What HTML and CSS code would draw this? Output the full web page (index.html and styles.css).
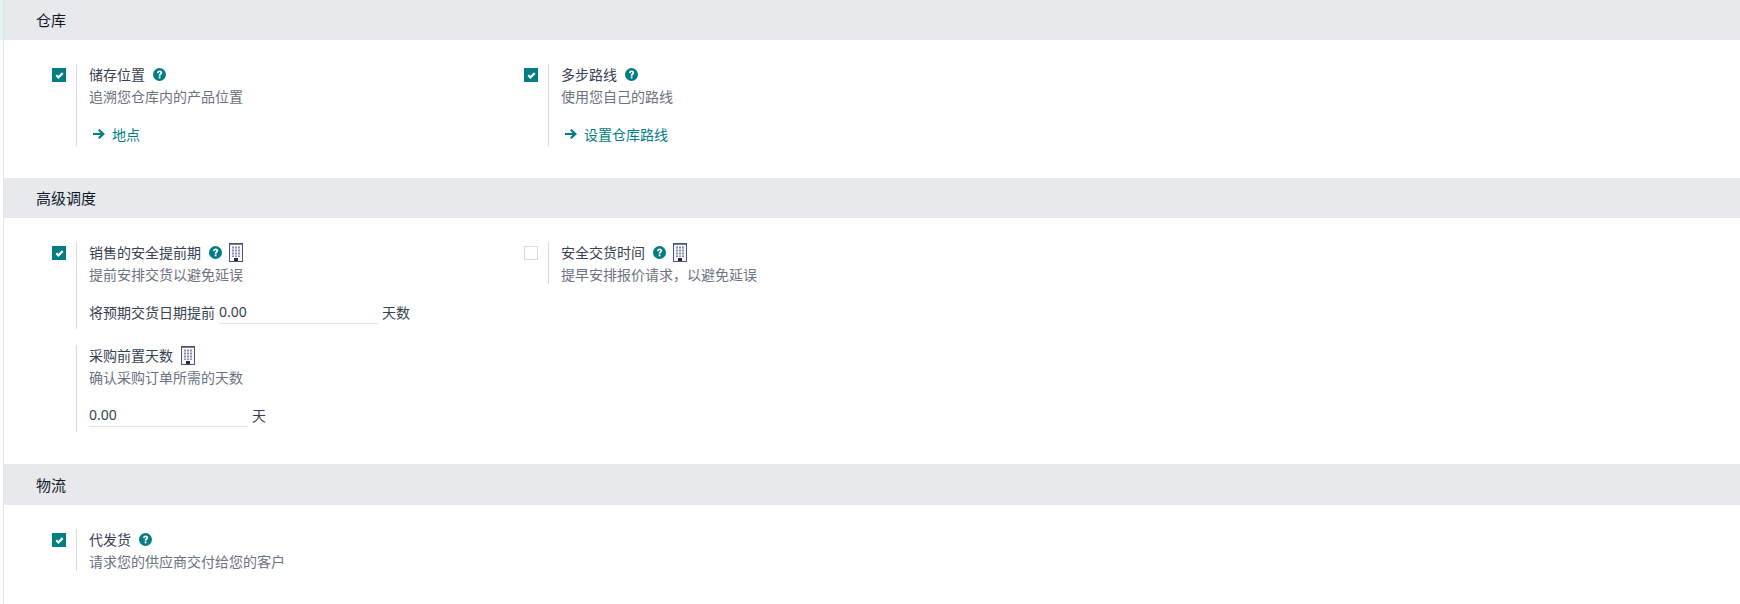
FILE: index.html
```html
<!DOCTYPE html>
<html lang="zh-CN">
<head>
<meta charset="utf-8">
<title>设置</title>
<link rel="stylesheet" href="styles.css">
</head>
<body>
<svg class="defs" width="0" height="0" aria-hidden="true">
  <symbol id="building" viewBox="0 0 14 19">
    <rect x="0.5" y="0.5" width="13" height="18" fill="#f4f7fc" stroke="#4a5273"/>
    <rect x="1" y="1" width="12" height="1" fill="#7d7f95"/>
    <g fill="#8d8fa8">
      <rect x="3" y="3.500" width="2" height="2"/><rect x="6" y="3.500" width="2" height="2"/><rect x="9" y="3.500" width="2" height="2"/>
      <rect x="3" y="6.500" width="2" height="2"/><rect x="6" y="6.500" width="2" height="2"/><rect x="9" y="6.500" width="2" height="2"/>
      <rect x="3" y="9.500" width="2" height="2"/><rect x="6" y="9.500" width="2" height="2"/><rect x="9" y="9.500" width="2" height="2"/>
      <rect x="3" y="12.500" width="2" height="1.500"/><rect x="6" y="12.500" width="2" height="1.500"/><rect x="9" y="12.500" width="2" height="1.500"/>
    </g>
    <rect x="5" y="15" width="4" height="3" fill="#2f2a33"/>
  </symbol>
  <symbol id="help" viewBox="0 0 13 13">
    <circle cx="6.500" cy="6.500" r="6.500" fill="#017e84"/>
    <path d="M4 5C4 3.400 5.100 2.500 6.600 2.500S9.200 3.400 9.200 4.700C9.200 6.400 7.500 6.400 7.500 7.700H5.700C5.700 5.600 7.300 5.700 7.300 4.800 7.300 4.400 7 4.100 6.500 4.100S5.700 4.500 5.700 5.200z" fill="#fff"/>
    <rect x="5.700" y="8.500" width="1.800" height="1.800" fill="#fff"/>
  </symbol>
  <symbol id="tick" viewBox="0 0 14 14">
    <path d="M4.300 7.300l2.100 2.100 4.300-4.300" fill="none" stroke="#fff" stroke-width="2.200"/>
  </symbol>
  <symbol id="arrow" viewBox="0 0 12 10">
    <path d="M0 4h7.500L5 1.500 6.500 0 12 5 6.500 10 5 8.500 7.500 6H0z" fill="#017e84"/>
  </symbol>
</svg>
<main class="page">
  <section>
    <h2 class="band">仓库</h2>
    <div class="grid short">
      <div class="setting">
        <span class="check on"><svg><use href="#tick"/></svg></span>
        <div class="body">
          <div class="label">储存位置<svg class="help"><use href="#help"/></svg></div>
          <div class="desc">追溯您仓库内的产品位置</div>
          <a class="link"><svg class="arrow"><use href="#arrow"/></svg>地点</a>
        </div>
      </div>
      <div class="setting">
        <span class="check on"><svg><use href="#tick"/></svg></span>
        <div class="body">
          <div class="label">多步路线<svg class="help"><use href="#help"/></svg></div>
          <div class="desc">使用您自己的路线</div>
          <a class="link"><svg class="arrow"><use href="#arrow"/></svg>设置仓库路线</a>
        </div>
      </div>
    </div>
  </section>
  <section>
    <h2 class="band">高级调度</h2>
    <div class="grid tall">
      <div class="stack">
        <div class="setting">
          <span class="check on"><svg><use href="#tick"/></svg></span>
          <div class="body">
            <div class="label">销售的安全提前期<svg class="help"><use href="#help"/></svg><svg class="bld"><use href="#building"/></svg></div>
            <div class="desc">提前安排交货以避免延误</div>
            <div class="field"><span class="prefix">将预期交货日期提前</span><span class="input">0.00</span><span class="unit">天数</span></div>
          </div>
        </div>
        <div class="setting">
          <span class="check none"></span>
          <div class="body">
            <div class="label">采购前置天数<svg class="bld"><use href="#building"/></svg></div>
            <div class="desc">确认采购订单所需的天数</div>
            <div class="field"><span class="input">0.00</span><span class="unit">天</span></div>
          </div>
        </div>
      </div>
      <div class="setting">
        <span class="check"></span>
        <div class="body">
          <div class="label">安全交货时间<svg class="help"><use href="#help"/></svg><svg class="bld"><use href="#building"/></svg></div>
          <div class="desc">提早安排报价请求，以避免延误</div>
        </div>
      </div>
    </div>
  </section>
  <section>
    <h2 class="band last">物流</h2>
    <div class="grid end">
      <div class="setting">
        <span class="check on"><svg><use href="#tick"/></svg></span>
        <div class="body">
          <div class="label">代发货<svg class="help"><use href="#help"/></svg></div>
          <div class="desc">请求您的供应商交付给您的客户</div>
        </div>
      </div>
    </div>
  </section>
</main>
</body>
</html>
```
FILE: styles.css
```css
* { box-sizing: border-box; }
html, body { margin: 0; padding: 0; height: 100%; }
body {
  font-family: "Noto Sans CJK SC", "Noto Sans", sans-serif;
  font-size: 14px;
  color: #374151;
  overflow: hidden;
  background: linear-gradient(#e2f3f1, #e2f3f1) 0 0 / 3px 40px no-repeat #fff;
}
.defs { display: block; height: 0; }
.page { height: 604px; margin-left: 3px; border-left: 1px solid #e2e4e8; }
.band {
  margin: 0;
  height: 40px;
  line-height: 40px;
  padding-left: 32px;
  background: #e7e9ed;
  color: #111827;
  font-size: 15px;
  font-weight: 400;
}
.band.last { height: 41px; line-height: 42px; }
.grid {
  display: grid;
  grid-template-columns: 472px 472px;
  padding: 24px 0 0 48px;
  align-items: start;
}
.grid.short { height: 138px; }
.grid.tall { height: 246px; }
.grid.end { height: 99px; }
.setting { display: flex; }
.stack { display: flex; flex-direction: column; gap: 16px; }
.check {
  flex: none;
  width: 14px;
  height: 14px;
  margin-top: 4px;
  margin-right: 10px;
  border: 1px solid #d8dadd;
  background: #fff;
}
.check.on { background: #017e84; border: 0; }
.check.on svg { display: block; width: 14px; height: 14px; }
.check.none { visibility: hidden; }
.body { border-left: 1px solid #d8dadd; padding-left: 12px; }
.label { display: flex; align-items: center; height: 21px; padding-bottom: 2px; color: #374151; white-space: nowrap; }
.desc { height: 21px; line-height: 23px; color: #6b7280; white-space: nowrap; }
.help { width: 13px; height: 13px; margin: 2px 0 0 8px; }
.bld { width: 14px; height: 19px; margin: 2px 0 0 8px; }
.help + .bld { margin-left: 7px; }
.link { display: flex; align-items: center; margin-top: 17px; height: 23px; padding-bottom: 2px; color: #017e84; white-space: nowrap; }
.arrow { width: 12px; height: 10px; margin: 0 7px 0 4px; }
.field { display: flex; margin-top: 16px; height: 29px; padding-bottom: 5px; white-space: nowrap; }
.prefix { line-height: 24px; margin-right: 4px; }
.input { width: 159px; height: 24px; line-height: 24px; border-bottom: 1px solid #e2e4e8; font-family: "Noto Sans", sans-serif; }
.unit { margin-left: 4px; line-height: 24px; }
```
